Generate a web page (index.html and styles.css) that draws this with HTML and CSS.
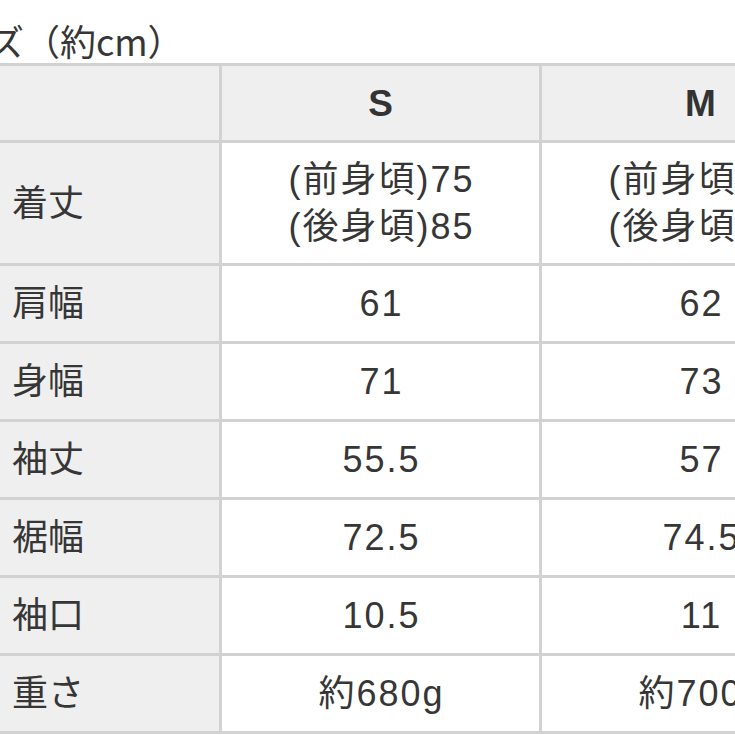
FILE: index.html
```html
<!DOCTYPE html>
<html lang="ja">
<head>
<meta charset="utf-8">
<link rel="stylesheet" href="styles.css">
</head>
<body>
<div class="page">
  <div class="title">サイズ（約cm）</div>
  <table class="size-table">
    <colgroup>
      <col class="col-label">
      <col class="col-size">
      <col class="col-size">
    </colgroup>
    <thead>
      <tr class="row-head">
        <th class="label"></th>
        <th>S</th>
        <th>M</th>
      </tr>
    </thead>
    <tbody>
      <tr class="row-tall">
        <td class="label">着丈</td>
        <td>(前身頃)75<br>(後身頃)85</td>
        <td>(前身頃)77<br>(後身頃)87</td>
      </tr>
      <tr><td class="label">肩幅</td><td>61</td><td>62</td></tr>
      <tr><td class="label">身幅</td><td>71</td><td>73</td></tr>
      <tr><td class="label">袖丈</td><td>55.5</td><td>57</td></tr>
      <tr><td class="label">裾幅</td><td>72.5</td><td>74.5</td></tr>
      <tr><td class="label">袖口</td><td>10.5</td><td>11</td></tr>
      <tr><td class="label">重さ</td><td>約680g</td><td>約700g</td></tr>
    </tbody>
  </table>
</div>
</body>
</html>
```

FILE: styles.css
```css
html, body {
  margin: 0;
  padding: 0;
  background: #ffffff;
  overflow: hidden;
}

.page {
  width: 735px;
  height: 735px;
  overflow: hidden;
  font-family: "Liberation Sans", "Noto Sans CJK JP", sans-serif;
  color: #363636;
}

.title {
  height: 63px;
  box-sizing: border-box;
  padding-top: 17px;
  line-height: 46px;
  font-size: 36px;
  font-family: "Noto Sans CJK JP", sans-serif;
  margin-left: -83px;
  white-space: nowrap;
  color: #363636;
}

.size-table {
  border-collapse: collapse;
  table-layout: fixed;
  width: 862px;
  margin-left: -3px;
  font-size: 36px;
}

.col-label { width: 222px; }
.col-size { width: 320px; }

.size-table th,
.size-table td {
  border: 3px solid #d2d2d2;
  text-align: center;
  vertical-align: middle;
  padding: 0;
  height: 78px;
  box-sizing: border-box;
  line-height: 47px;
  font-weight: normal;
  white-space: nowrap;
  overflow: hidden;
}

.size-table td {
  letter-spacing: 2px;
  padding-left: 2px;
}

.size-table th {
  background: #efefef;
  font-weight: bold;
  font-size: 37px;
  color: #333333;
}

.size-table .label {
  background: #efefef;
  text-align: left;
  padding-left: 12px;
  letter-spacing: 0;
  font-weight: normal;
}

.row-head th {
  height: 77px;
}

.row-tall td {
  height: 123px;
}
```
